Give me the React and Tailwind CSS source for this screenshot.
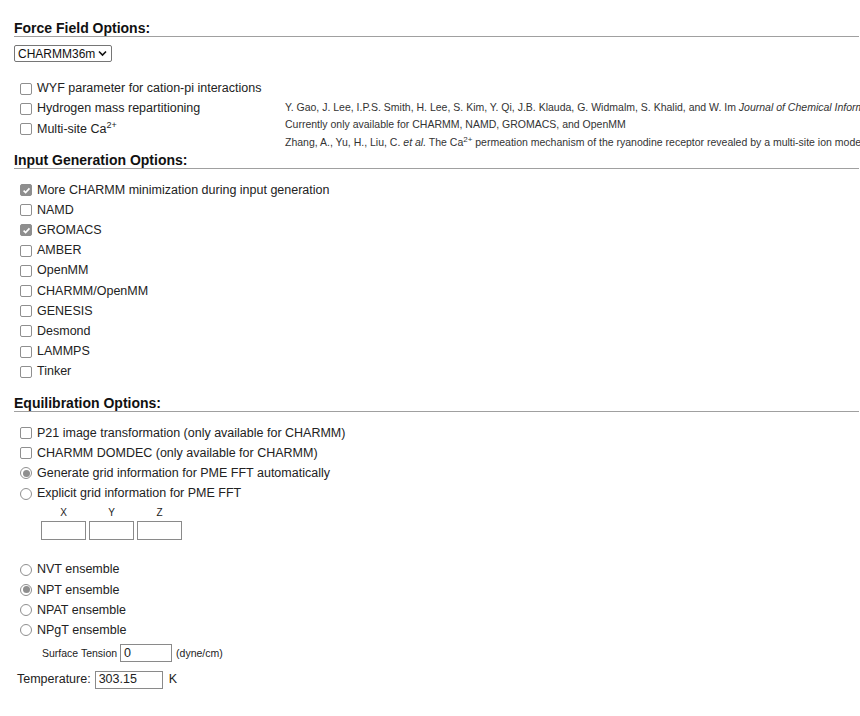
import React from "react";

const font = { fontFamily: '"Liberation Sans", Arial, sans-serif' };

function Box({ checked }) {
  return (
    <span
      className={`inline-flex items-center justify-center w-[12px] h-[12px] rounded-[2px] border shrink-0 ${
        checked ? "bg-[#8e8e8e] border-[#8e8e8e]" : "bg-white border-[#8f8f8f]"
      }`}
    >
      {checked && (
        <svg width="9" height="9" viewBox="0 0 10 10">
          <path d="M1.8 5.2 L4 7.4 L8.3 2.6" fill="none" stroke="white" strokeWidth="1.8" />
        </svg>
      )}
    </span>
  );
}

function Radio({ checked }) {
  return (
    <span className="inline-flex items-center justify-center w-[12px] h-[12px] rounded-full border border-[#8f8f8f] bg-white shrink-0">
      {checked && <span className="w-[7px] h-[7px] rounded-full bg-[#8e8e8e]" />}
    </span>
  );
}

function Row({ children, radio, checked }) {
  return (
    <div className="flex items-center h-[20.2px] pl-[6px] gap-[5px] text-[12.5px] text-[#222] whitespace-nowrap">
      {radio ? <Radio checked={checked} /> : <Box checked={checked} />}
      <span>{children}</span>
    </div>
  );
}

function Heading({ children, className = "" }) {
  return (
    <div className={`h-[18px] leading-[18px] border-b border-[#a0a0a0] text-[14px] font-bold text-[#111] ${className}`}>
      {children}
    </div>
  );
}

function Field({ w, value = "", h = "h-[19px]" }) {
  return (
    <span className={`inline-flex items-center ${w} ${h} border border-[#8a8a8a] bg-white px-[3px] text-[12.5px] text-[#222]`}>
      {value}
    </span>
  );
}

export default function App() {
  return (
    <div className="w-[860px] h-[716px] bg-white overflow-hidden" style={font}>
      <div className="pl-[14px] pr-[1px] pt-[19px]">
        {/* Force Field */}
        <Heading>Force Field Options:</Heading>
        <div className="mt-[8px] inline-flex items-center gap-[3px] h-[17px] border border-[#767676] rounded-[2px] pl-[3px] pr-[4px] text-[12px] text-[#111] whitespace-nowrap">
          <span>CHARMM36m</span>
          <svg width="9" height="7" viewBox="0 0 9 7" className="shrink-0">
            <path d="M1 1.5 L4.5 5 L8 1.5" fill="none" stroke="#111" strokeWidth="1.6" />
          </svg>
        </div>

        <div className="mt-[14px] flex">
          <div className="w-[271px] shrink-0">
            <Row>WYF parameter for cation-pi interactions</Row>
            <Row>Hydrogen mass repartitioning</Row>
            <Row>
              Multi-site Ca<sup className="text-[9px]">2+</sup>
            </Row>
          </div>
          <div className="pt-[20px] text-[10.5px] text-[#333] whitespace-nowrap leading-[17.5px]">
            <div>
              Y. Gao, J. Lee, I.P.S. Smith, H. Lee, S. Kim, Y. Qi, J.B. Klauda, G. Widmalm, S. Khalid, and W. Im{" "}
              <i>Journal of Chemical Information and Modeling</i>
            </div>
            <div>Currently only available for CHARMM, NAMD, GROMACS, and OpenMM</div>
            <div>
              Zhang, A., Yu, H., Liu, C. <i>et al.</i> The Ca<sup className="text-[8px]">2+</sup> permeation mechanism of the ryanodine receptor revealed by a multi-site ion model
            </div>
          </div>
        </div>

        {/* Input Generation */}
        <Heading>Input Generation Options:</Heading>
        <div className="mt-[11px]">
          <Row checked>More CHARMM minimization during input generation</Row>
          <Row>NAMD</Row>
          <Row checked>GROMACS</Row>
          <Row>AMBER</Row>
          <Row>OpenMM</Row>
          <Row>CHARMM/OpenMM</Row>
          <Row>GENESIS</Row>
          <Row>Desmond</Row>
          <Row>LAMMPS</Row>
          <Row>Tinker</Row>
        </div>

        {/* Equilibration */}
        <Heading className="mt-[12px]">Equilibration Options:</Heading>
        <div className="mt-[11px]">
          <Row>P21 image transformation (only available for CHARMM)</Row>
          <Row>CHARMM DOMDEC (only available for CHARMM)</Row>
          <Row radio checked>Generate grid information for PME FFT automatically</Row>
          <Row radio>Explicit grid information for PME FFT</Row>
        </div>
        <div className="ml-[27px] mt-[1px] grid grid-cols-[45px_45px_45px] gap-x-[3px] text-[10px] text-[#222]">
          <div className="text-center h-[16px] leading-[16px]">X</div>
          <div className="text-center h-[16px] leading-[16px]">Y</div>
          <div className="text-center h-[16px] leading-[16px]">Z</div>
          <Field w="w-[45px]" />
          <Field w="w-[45px]" />
          <Field w="w-[45px]" />
        </div>

        <div className="mt-[20px]">
          <Row radio>NVT ensemble</Row>
          <Row radio checked>NPT ensemble</Row>
          <Row radio>NPAT ensemble</Row>
          <Row radio>NPgT ensemble</Row>
        </div>
        <div className="mt-[4px] ml-[28px] flex items-center gap-[3px] text-[10.5px] text-[#222]">
          <span>Surface Tension</span>
          <Field w="w-[52px]" h="h-[18px]" value="0" />
          <span className="ml-[1px]">(dyne/cm)</span>
        </div>
        <div className="mt-[8px] ml-[3px] flex items-center gap-[4px] text-[12.5px] text-[#222]">
          <span>Temperature:</span>
          <Field w="w-[68px]" h="h-[18px]" value="303.15" />
          <span className="ml-[2px]">K</span>
        </div>
      </div>
    </div>
  );
}
